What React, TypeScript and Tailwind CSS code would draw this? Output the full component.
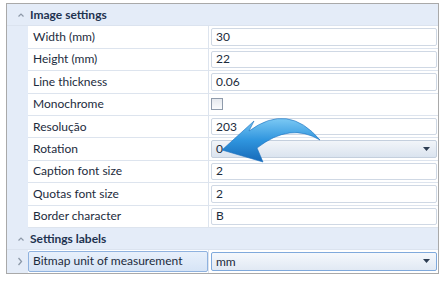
import React from 'react';

type Row = { label: string; value: string; kind?: 'text' | 'check' | 'combo' };

const imageRows: Row[] = [
  { label: 'Width (mm)', value: '30' },
  { label: 'Height (mm)', value: '22' },
  { label: 'Line thickness', value: '0.06' },
  { label: 'Monochrome', value: '', kind: 'check' },
  { label: 'Resolução', value: '203' },
  { label: 'Rotation', value: '0', kind: 'combo' },
  { label: 'Caption font size', value: '2' },
  { label: 'Quotas font size', value: '2' },
  { label: 'Border character', value: 'B' },
];

const ChevronUp = () => (
  <svg width="8" height="6" viewBox="0 0 8 6">
    <path d="M1.5 4.5 L4 2 L6.5 4.5" fill="none" stroke="#8d99a8" strokeWidth="1.2" />
  </svg>
);

const ChevronRight = () => (
  <svg width="6" height="9" viewBox="0 0 6 9">
    <path d="M1.5 1 L4.5 4.5 L1.5 8" fill="none" stroke="#8d99a8" strokeWidth="1.3" />
  </svg>
);

const DropArrow = () => (
  <svg width="7" height="4" viewBox="0 0 7 4">
    <path d="M0 0 H7 L3.5 4 Z" fill="#2d3d52" />
  </svg>
);

const SectionHeader = ({ title }: { title: string }) => (
  <div className="h-[22.4px] flex items-center border-b border-[#dbe3ef]">
    <div className="w-[21px] flex justify-center pl-[6px]">
      <ChevronUp />
    </div>
    <span className="pl-[2px] font-bold text-[#1e3350]">{title}</span>
  </div>
);

const ValueCell = ({ row }: { row: Row }) => {
  if (row.kind === 'check') {
    return (
      <div className="h-full flex items-center pl-[2px]">
        <div className="w-[12px] h-[12px] border border-[#8f9bab] bg-gradient-to-b from-[#e6e9ee] to-[#fafbfc]" />
      </div>
    );
  }
  if (row.kind === 'combo') {
    return (
      <div className="h-full py-[2px] pl-[2px] pr-[1px]">
        <div className="h-full flex items-center justify-between pl-[4px] pr-[6px] border border-[#c4cfdd] rounded-[2px] bg-gradient-to-b from-[#f2f5f9] to-[#dbe4ef]">
          <span>{row.value}</span>
          <DropArrow />
        </div>
      </div>
    );
  }
  return (
    <div className="h-full py-[2px] pl-[2px] pr-[1px]">
      <div className="h-full flex items-center pl-[4px] border border-[#cfd8e4] rounded-[2px] bg-white">
        {row.value}
      </div>
    </div>
  );
};

const PropRow = ({ row }: { row: Row }) => (
  <div className="h-[22.4px] flex">
    <div className="w-[21px]" />
    <div className="w-[181px] flex items-center pl-[5px] bg-white border-b border-r border-[#dde4ee]">
      {row.label}
    </div>
    <div className="flex-1 bg-white border-b border-[#dde4ee]">
      <ValueCell row={row} />
    </div>
  </div>
);

const Arrow = () => (
  <svg className="absolute left-0 top-0 pointer-events-none" width="447" height="282" viewBox="0 0 447 282">
    <defs>
      <linearGradient id="ag" x1="0" y1="0" x2="0" y2="1">
        <stop offset="0" stopColor="#7cc9f4" />
        <stop offset="0.5" stopColor="#2f95de" />
        <stop offset="1" stopColor="#1669b8" />
      </linearGradient>
    </defs>
    <path
      d="M222 150 L254 121 L249 131 Q288 102 320 140 Q290 122 257 148 L263 162 Z"
      fill="url(#ag)"
      stroke="#1a6fbd"
      strokeWidth="0.6"
    />
  </svg>
);

export default function App() {
  return (
    <div className="relative w-[447px] h-[282px] bg-white pt-[3px] pl-[6px] text-[12px] text-[#1c2b3d] font-['Lato',sans-serif]">
      <div className="w-[433px] h-[271px] border border-[#a9a9a9] bg-[#e4ecf8] flex flex-col overflow-hidden">
        <SectionHeader title="Image settings" />
        {imageRows.map((r) => (
          <PropRow key={r.label} row={r} />
        ))}
        <SectionHeader title="Settings labels" />
        <div className="h-[22.4px] flex">
          <div className="w-[21px] flex items-center justify-center pl-[4px]">
            <ChevronRight />
          </div>
          <div className="w-[181px] py-[1px] bg-white border-r border-[#dde4ee]">
            <div className="h-full flex items-center pl-[4px] border border-[#8fb2df] rounded-[2px] bg-gradient-to-b from-[#e8f0fb] to-[#d6e4f6]">
              Bitmap unit of measurement
            </div>
          </div>
          <div className="flex-1 bg-white py-[2px] pl-[2px] pr-[1px]">
            <div className="h-full flex items-center justify-between pl-[4px] pr-[6px] border border-[#7fa9dc] rounded-[2px] bg-gradient-to-b from-[#f5f8fc] to-[#e1e9f4]">
              <span>mm</span>
              <DropArrow />
            </div>
          </div>
        </div>
      </div>
      <Arrow />
    </div>
  );
}
